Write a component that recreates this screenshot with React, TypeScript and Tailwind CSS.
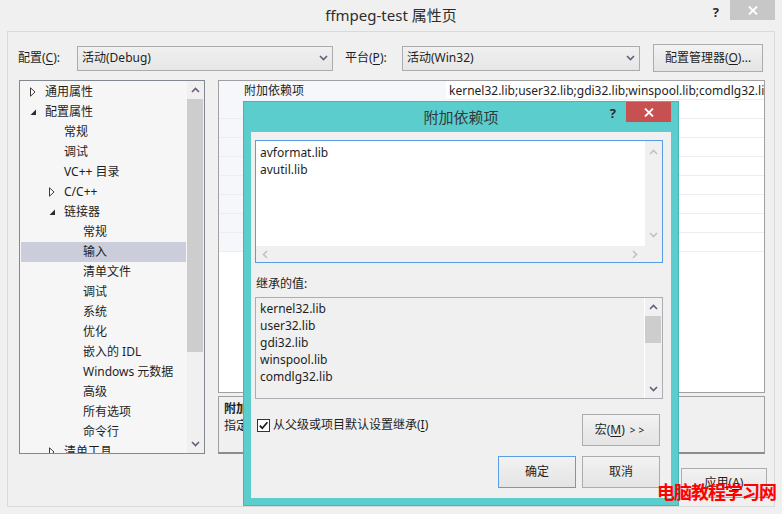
import React from "react";

type TreeItem = {
  label: string;
  level: 0 | 1 | 2;
  arrow?: "open" | "closed";
  selected?: boolean;
};

const treeItems: TreeItem[] = [
  { label: "通用属性", level: 0, arrow: "closed" },
  { label: "配置属性", level: 0, arrow: "open" },
  { label: "常规", level: 1 },
  { label: "调试", level: 1 },
  { label: "VC++ 目录", level: 1 },
  { label: "C/C++", level: 1, arrow: "closed" },
  { label: "链接器", level: 1, arrow: "open" },
  { label: "常规", level: 2 },
  { label: "输入", level: 2, selected: true },
  { label: "清单文件", level: 2 },
  { label: "调试", level: 2 },
  { label: "系统", level: 2 },
  { label: "优化", level: 2 },
  { label: "嵌入的 IDL", level: 2 },
  { label: "Windows 元数据", level: 2 },
  { label: "高级", level: 2 },
  { label: "所有选项", level: 2 },
  { label: "命令行", level: 2 },
  { label: "清单工具", level: 1, arrow: "closed" },
];

const levelPad = ["pl-[9px]", "pl-[28px]", "pl-[47px]"];

const inherited = ["kernel32.lib", "user32.lib", "gdi32.lib", "winspool.lib", "comdlg32.lib"];

const Chevron = ({ up = false, color = "#6d5a7b" }: { up?: boolean; color?: string }) => (
  <svg width="9" height="6" viewBox="0 0 9 6">
    <path
      d={up ? "M1 5L4.5 1.5L8 5" : "M1 1L4.5 4.5L8 1"}
      stroke={color}
      strokeWidth="1.6"
      fill="none"
    />
  </svg>
);

const SideChevron = ({ right = false }: { right?: boolean }) => (
  <svg width="6" height="9" viewBox="0 0 6 9">
    <path
      d={right ? "M1 1L4.5 4.5L1 8" : "M5 1L1.5 4.5L5 8"}
      stroke="#c2c2c2"
      strokeWidth="1.6"
      fill="none"
    />
  </svg>
);

const CloseX = () => (
  <svg width="10" height="9" viewBox="0 0 10 9">
    <path d="M1 0.5L9 8.5M9 0.5L1 8.5" stroke="white" strokeWidth="1.8" />
  </svg>
);

const Triangle = ({ open }: { open: boolean }) =>
  open ? (
    <svg width="7" height="7" viewBox="0 0 7 7">
      <path d="M6 0.5V6H0.5Z" fill="#2b2b2b" />
    </svg>
  ) : (
    <svg width="6" height="10" viewBox="0 0 6 10">
      <path d="M0.5 0.8L5 5L0.5 9.2Z" fill="white" stroke="#3a3a3a" strokeWidth="1" />
    </svg>
  );

const Btn = ({
  children,
  className = "",
}: {
  children: React.ReactNode;
  className?: string;
}) => (
  <div
    className={`flex items-center justify-center border bg-gradient-to-b from-[#f2f2f2] to-[#e4e4e4] ${className}`}
  >
    {children}
  </div>
);

const Combo = ({ text, className }: { text: string; className: string }) => (
  <div
    className={`flex h-[25px] items-center justify-between border border-[#acacac] bg-gradient-to-b from-[#f0f0f0] to-[#e6e6e6] pl-[4px] pr-[4px] ${className}`}
  >
    <span>{text}</span>
    <Chevron />
  </div>
);

export default function App() {
  return (
    <div className="relative h-[514px] w-[782px] overflow-hidden bg-[#f0f0f0] font-['Noto_Sans','Noto_Sans_CJK_SC',sans-serif] text-[12px] leading-[16px] text-[#1e1e1e]">
      {/* window title */}
      <div className="grid h-[31px] grid-cols-[1fr_auto_1fr]">
        <div />
        <div className="pt-[4px] text-[15px] leading-[22px] text-[#2d2d2d]">ffmpeg-test 属性页</div>
        <div className="flex items-start justify-end pr-[7px]">
          <span className="mr-[11px] mt-[4px] text-[13px] font-bold leading-[16px] text-[#2b2b2b]">?</span>
          <div className="flex h-[20px] w-[45px] items-center justify-center bg-[#c7c7c7]">
            <CloseX />
          </div>
        </div>
      </div>

      {/* window body */}
      <div className="ml-[7px] flex h-[476px] w-[768px] flex-col border border-[#dadada]">
        {/* configuration row */}
        <div className="mt-[12px] flex h-[28px] items-center pl-[10px]">
          <span className="w-[59px]">
            配置(<span className="underline underline-offset-2">C</span>):
          </span>
          <Combo text="活动(Debug)" className="w-[256px]" />
          <span className="ml-[12px] w-[57px]">
            平台(<span className="underline underline-offset-2">P</span>):
          </span>
          <Combo text="活动(Win32)" className="w-[238px]" />
          <Btn className="ml-[13px] h-[28px] w-[110px] border-[#acacac]">
            配置管理器(<span className="underline underline-offset-2">O</span>)...
          </Btn>
        </div>

        {/* main area */}
        <div className="mt-[8px] flex h-[374px] pl-[11px]">
          {/* tree */}
          <div className="flex w-[186px] overflow-hidden border border-[#828790] bg-[#f6f6f6]">
            <div className="flex-1 overflow-hidden pt-[1px]">
              {treeItems.map((item, i) => (
                <div
                  key={i}
                  className={`mx-px flex h-[20px] items-center whitespace-nowrap ${levelPad[item.level]} ${
                    item.selected ? "bg-[#cbcdda]" : ""
                  }`}
                >
                  <span className="flex w-[15px] items-center">
                    {item.arrow && <Triangle open={item.arrow === "open"} />}
                  </span>
                  <span>{item.label}</span>
                </div>
              ))}
            </div>
            <div className="flex w-[17px] flex-col bg-[#f0f0f0]">
              <div className="flex h-[18px] items-center justify-center">
                <Chevron up />
              </div>
              <div className="mr-[1px] h-[253px] bg-[#cdcdcd]" />
              <div className="flex-1" />
              <div className="flex h-[18px] items-center justify-center">
                <Chevron />
              </div>
            </div>
          </div>

          {/* property grid and description */}
          <div className="ml-[13px] flex w-[547px] flex-col">
            <div className="h-[313px] overflow-hidden border border-[#a0a0a0] bg-white">
              {Array.from({ length: 9 }).map((_, i) => (
                <div key={i} className="grid h-[19px] grid-cols-[227px_1fr] border-b border-[#eaedf2]">
                  <div className="bg-[#f5f7fb] pl-[25px] leading-[19px]">{i === 0 ? "附加依赖项" : ""}</div>
                  <div className="overflow-hidden whitespace-nowrap pl-[3px] leading-[19px]">
                    {i === 0 ? "kernel32.lib;user32.lib;gdi32.lib;winspool.lib;comdlg32.lib;advapi32.lib" : ""}
                  </div>
                </div>
              ))}
            </div>
            <div className="mt-[3px] h-[58px] border-x border-t border-b-2 border-[#a0a0a0] border-b-[#8c8c8c] bg-[#f0f0f0] px-[5px] pt-[3px] leading-[17px]">
              <div className="font-bold">附加依赖项</div>
              <div>指定要添加到链接命令行的附加项。[例如 kernel32.lib]</div>
            </div>
          </div>
        </div>

        {/* bottom buttons */}
        <div className="mt-[14px] flex justify-end gap-[6px] pr-[7px]">
          <Btn className="h-[30px] w-[86px] border-[#acacac]">确定</Btn>
          <Btn className="h-[30px] w-[86px] border-[#acacac]">取消</Btn>
          <Btn className="h-[30px] w-[86px] border-[#acacac]">
            应用(<span className="underline underline-offset-2">A</span>)
          </Btn>
        </div>
      </div>

      {/* dialog window */}
      <div className="absolute left-[243px] top-[101px] flex h-[405px] w-[436px] flex-col border border-[#47b5b5] bg-[#5ccdcd] px-[7px] pb-[7px]">
        <div className="grid h-[30px] grid-cols-[1fr_auto_1fr]">
          <div />
          <div className="pt-[4px] text-[15px] leading-[22px] text-[#2f3a3a]">附加依赖项</div>
          <div className="flex items-start justify-end">
            <span className="mr-[10px] mt-[3px] text-[13px] font-bold leading-[16px] text-[#2a2a35]">?</span>
            <div className="flex h-[20px] w-[45px] items-center justify-center bg-[#c75050]">
              <CloseX />
            </div>
          </div>
        </div>

        <div className="flex flex-1 flex-col bg-[#f0f0f0] pl-[4px] pr-[8px] pt-[8px]">
          {/* edit box */}
          <div className="grid h-[123px] grid-cols-[1fr_17px] grid-rows-[1fr_16px] border border-[#569de5] bg-white">
            <div className="pl-[4px] pt-[3px] leading-[17px]">
              <div>avformat.lib</div>
              <div>avutil.lib</div>
            </div>
            <div className="flex flex-col justify-between bg-[#f0f0f0] py-[8px]">
              <div className="flex justify-center">
                <Chevron up color="#c2c2c2" />
              </div>
              <div className="flex justify-center">
                <Chevron color="#c2c2c2" />
              </div>
            </div>
            <div className="flex items-center justify-between bg-[#f0f0f0] pl-[6px] pr-[7px]">
              <SideChevron />
              <SideChevron right />
            </div>
            <div className="bg-[#f0f0f0]" />
          </div>

          <div className="pb-[5px] pl-[1px] pt-[13px] leading-[16px]">继承的值:</div>

          {/* inherited values */}
          <div className="flex h-[102px] border border-[#abadb3] bg-[#f0f0f0]">
            <div className="flex-1 pl-[4px] pt-[2px] leading-[17px]">
              {inherited.map((lib) => (
                <div key={lib}>{lib}</div>
              ))}
            </div>
            <div className="flex w-[18px] flex-col border-l border-white bg-[#f0f0f0]">
              <div className="flex h-[18px] items-center justify-center">
                <Chevron up />
              </div>
              <div className="mr-[1px] h-[27px] bg-[#cdcdcd]" />
              <div className="flex-1" />
              <div className="flex h-[18px] items-center justify-center">
                <Chevron />
              </div>
            </div>
          </div>

          <div className="flex justify-between">
            <div className="mt-[18px] flex h-[16px] items-center pl-[2px]">
              <div className="flex h-[13px] w-[13px] items-center justify-center border border-[#333] bg-white">
                <svg width="11" height="11" viewBox="0 0 11 11">
                  <path d="M1.8 5.6L4.3 8.2L9.4 2.2" stroke="#1e1e1e" strokeWidth="1.7" fill="none" />
                </svg>
              </div>
              <span className="ml-[3px]">
                从父级或项目默认设置继承(<span className="underline underline-offset-2">I</span>)
              </span>
            </div>
            <Btn className="mr-[3px] mt-[15px] h-[32px] w-[78px] border-[#acacac]">
              宏(<span className="underline underline-offset-2">M</span>)
              <span className="ml-[5px] text-[10px] tracking-[3px]">&gt;&gt;</span>
            </Btn>
          </div>

          <div className="mr-[3px] mt-[10px] flex justify-end gap-[6px]">
            <Btn className="h-[32px] w-[78px] border-[#5a9fe6]">确定</Btn>
            <Btn className="h-[32px] w-[78px] border-[#acacac]">取消</Btn>
          </div>
        </div>
      </div>

      {/* watermark */}
      <div className="absolute left-[657px] top-[481px] whitespace-nowrap text-[18px] font-bold leading-[22px] tracking-[-1px] text-[#ff0000]">
        电脑教程学习网
      </div>
    </div>
  );
}
